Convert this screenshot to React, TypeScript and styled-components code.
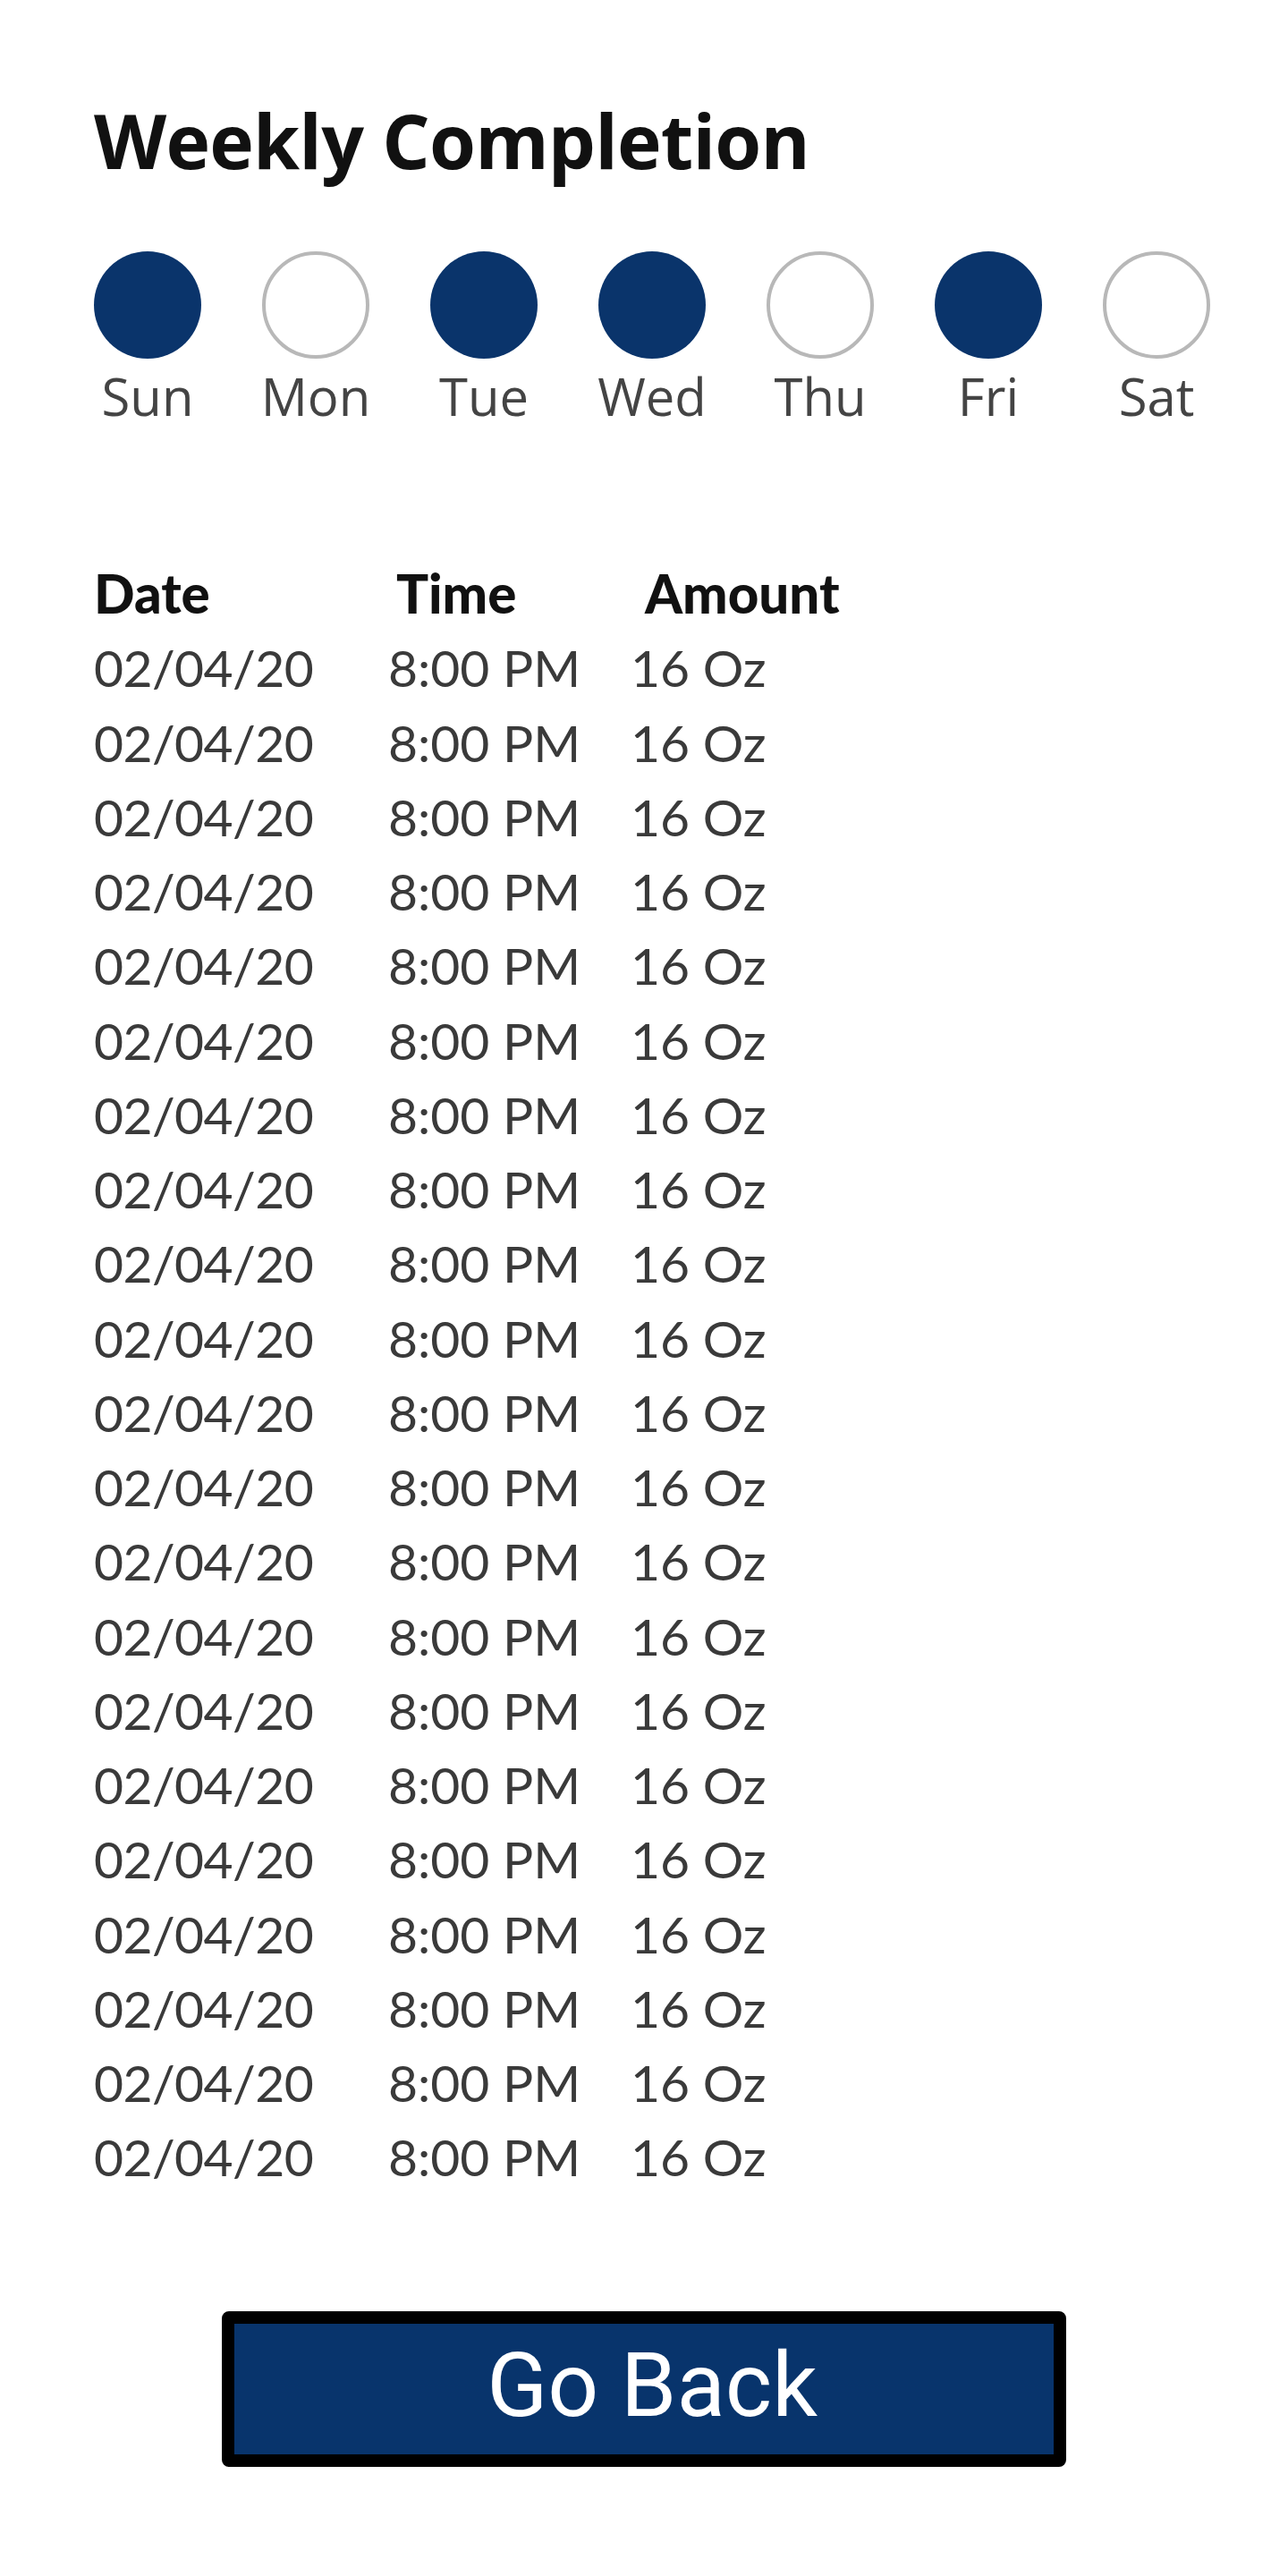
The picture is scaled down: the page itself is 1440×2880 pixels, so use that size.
import React from "react";
import styled, { createGlobalStyle } from "styled-components";

const GlobalStyle = createGlobalStyle`
  html, body {
    margin: 0;
    padding: 0;
    background: #fff;
  }
`;

const Page = styled.div`
  width: 1440px;
  min-height: 2880px;
  box-sizing: border-box;
  padding: 114px 0 0 105px;
  display: flex;
  flex-direction: column;
`;

const Title = styled.h1`
  margin: 0;
  font-family: "Open Sans", "Noto Sans", sans-serif;
  font-weight: 700;
  font-size: 84px;
  line-height: 86px;
  color: #111;
  letter-spacing: -0.8px;
`;

const WeekRow = styled.div`
  display: flex;
  gap: 68px;
  margin-top: 81px;
`;

const Day = styled.div`
  width: 120px;
  display: flex;
  flex-direction: column;
  align-items: center;
  gap: 12px;
`;

const Dot = styled.div<{ $done: boolean }>`
  width: 120px;
  height: 120px;
  border-radius: 50%;
  box-sizing: border-box;
  background: ${(p) => (p.$done ? "#0a346b" : "#fff")};
  border: ${(p) => (p.$done ? "none" : "4px solid #b8b8b8")};
`;

const DayLabel = styled.span`
  font-family: "Open Sans", "Noto Sans", sans-serif;
  font-size: 58px;
  line-height: 60px;
  color: #444;
  white-space: nowrap;
`;

const Table = styled.div`
  margin-top: 149px;
  display: grid;
  grid-template-columns: 329px 271px 300px;
  grid-auto-rows: 83.25px;
  align-items: center;
`;

const HeadCell = styled.div<{ $shift?: number }>`
  font-family: "Lato", "Liberation Sans", sans-serif;
  font-weight: 900;
  font-size: 60px;
  line-height: 83px;
  color: #111;
  padding-left: ${(p) => p.$shift ?? 0}px;
`;

const Cell = styled.div`
  font-family: "Lato", "Liberation Sans", sans-serif;
  font-weight: 400;
  font-size: 57px;
  line-height: 83px;
  color: #3a3a3a;
  white-space: nowrap;
`;

const DateCell = styled(Cell)`
  letter-spacing: -0.6px;
`;

const Footer = styled.div`
  display: flex;
  justify-content: center;
  margin: 130px 0 0 -105px;
`;

const BackButton = styled.button`
  width: 944px;
  height: 174px;
  box-sizing: border-box;
  border: 14px solid #000;
  border-radius: 8px;
  background: #08346c;
  color: #fff;
  font-family: Roboto, "Liberation Sans", sans-serif;
  font-size: 100px;
  font-weight: 400;
  line-height: 1;
  padding: 0 0 8px 18px;
  cursor: pointer;
`;

const days = [
  { name: "Sun", done: true },
  { name: "Mon", done: false },
  { name: "Tue", done: true },
  { name: "Wed", done: true },
  { name: "Thu", done: false },
  { name: "Fri", done: true },
  { name: "Sat", done: false },
];

const entries = Array.from({ length: 21 }, () => ({
  date: "02/04/20",
  time: "8:00 PM",
  amount: "16 Oz",
}));

const App: React.FC = () => {
  return (
    <>
      <GlobalStyle />
      <Page>
        <Title>Weekly Completion</Title>
        <WeekRow>
          {days.map((d) => (
            <Day key={d.name}>
              <Dot $done={d.done} />
              <DayLabel>{d.name}</DayLabel>
            </Day>
          ))}
        </WeekRow>

        <Table>
          <HeadCell>Date</HeadCell>
          <HeadCell $shift={9}>Time</HeadCell>
          <HeadCell $shift={16}>Amount</HeadCell>
          {entries.map((e, i) => (
            <React.Fragment key={i}>
              <DateCell>{e.date}</DateCell>
              <Cell>{e.time}</Cell>
              <Cell>{e.amount}</Cell>
            </React.Fragment>
          ))}
        </Table>

        <Footer>
          <BackButton>Go Back</BackButton>
        </Footer>
      </Page>
    </>
  );
};

export default App;
